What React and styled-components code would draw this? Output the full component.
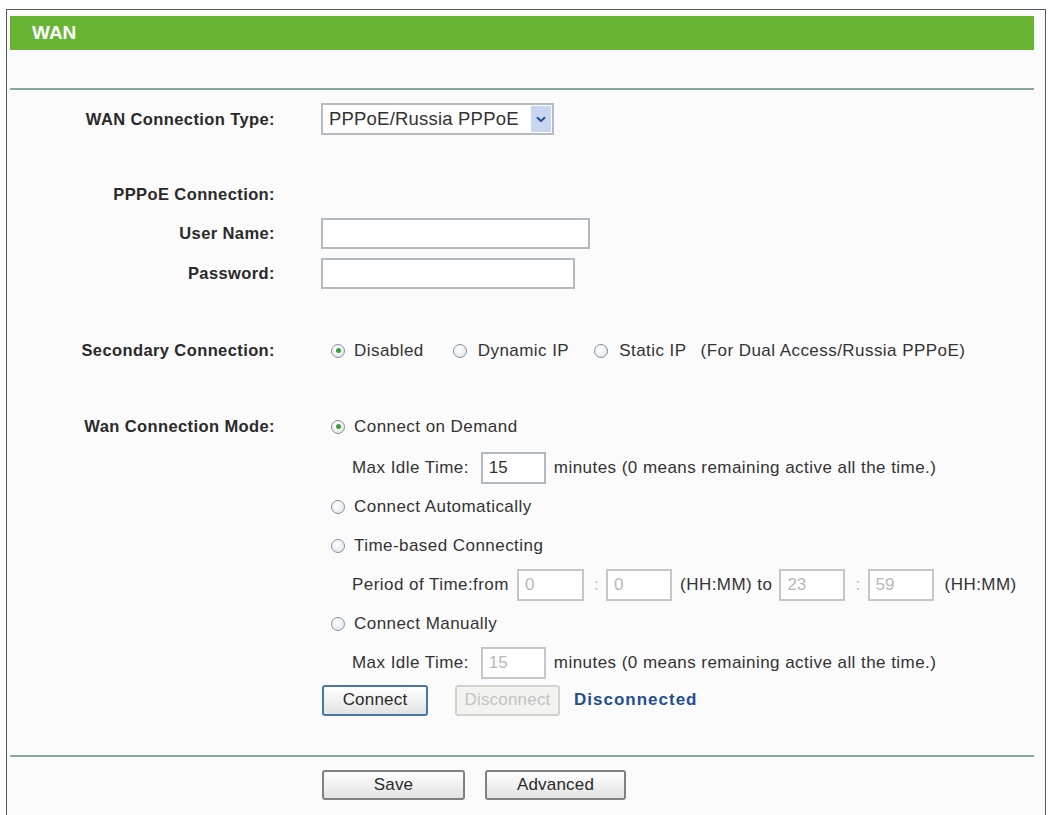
import React from "react";
import styled, { createGlobalStyle } from "styled-components";

const GlobalStyle = createGlobalStyle`
  body {
    margin: 0;
    background: #ffffff;
    font-family: "Liberation Sans", Arial, sans-serif;
    color: #222;
  }
`;

const Frame = styled.div`
  margin: 9px 0 0 6px;
  width: 1040px;
  min-height: 820px;
  border: 1px solid #5a5a5a;
  border-bottom: none;
  background: #fbfbfb;
  padding: 6px 11px 0 3px;
  box-sizing: border-box;
`;

const TitleBar = styled.div`
  height: 34px;
  background: #67b533;
  color: #fff;
  font-weight: bold;
  font-size: 19px;
  display: flex;
  align-items: center;
  padding-left: 22px;
`;

const Divider = styled.div`
  height: 2px;
  background: #86a99c;
  margin-top: ${(p) => p.$mt}px;
`;

const Row = styled.div`
  display: flex;
  align-items: center;
  height: ${(p) => p.$h}px;
  margin-top: ${(p) => p.$mt || 0}px;
  margin-left: -3px;
`;

const Label = styled.div`
  width: 268px;
  flex-shrink: 0;
  text-align: right;
  font-weight: bold;
  font-size: 16.5px;
  letter-spacing: 0.4px;
  color: #2a2a2a;
`;

const Field = styled.div`
  display: flex;
  align-items: center;
  margin-left: ${(p) => 46 + (p.$indent || 0)}px;
  font-size: 17px;
  letter-spacing: 0.45px;
  color: #333;
  white-space: nowrap;
`;

const Select = styled.div`
  width: 233px;
  height: 32px;
  box-sizing: border-box;
  border: 2px solid #b7bcc3;
  background: #fff;
  display: flex;
  align-items: center;
  justify-content: space-between;
  padding-left: 6px;
  font-size: 18.5px;
  letter-spacing: 0.2px;
  color: #333;
`;

const SelectArrow = styled.span`
  width: 20px;
  height: 26px;
  margin-right: 1px;
  background: #c8d6f2;
  display: flex;
  align-items: center;
  justify-content: center;
`;

const TextBox = styled.div`
  width: ${(p) => p.$w}px;
  height: ${(p) => p.$h || 32}px;
  box-sizing: border-box;
  border: 2px solid ${(p) => (p.$disabled ? "#c4c7cb" : "#b3b9c1")};
  background: #fff;
  color: ${(p) => (p.$disabled ? "#b9b9b9" : "#333")};
  font-size: 17px;
  letter-spacing: 0;
  display: flex;
  align-items: center;
  padding-left: 6px;
  margin: ${(p) => p.$m || "0"};
  flex-shrink: 0;
`;

const Option = styled.label`
  display: flex;
  align-items: center;
  margin-right: ${(p) => p.$gap || 0}px;
`;

const RadioDot = styled.span`
  width: 14px;
  height: 14px;
  box-sizing: border-box;
  border-radius: 50%;
  border: 1.5px solid #8391a0;
  background: radial-gradient(circle at 40% 35%, #ffffff, #dde2e8);
  margin: 0 ${(p) => p.$space || 9}px 0 -1px;
  display: flex;
  align-items: center;
  justify-content: center;
  flex-shrink: 0;

  &::after {
    content: "";
    width: 5px;
    height: 5px;
    border-radius: 50%;
    background: ${(p) => (p.$checked ? "#3f9c3a" : "transparent")};
  }
`;

const Note = styled.span`
  color: ${(p) => (p.$muted ? "#b9b9b9" : "inherit")};
`;

const Button = styled.div`
  width: ${(p) => p.$w}px;
  height: ${(p) => p.$h || 31}px;
  box-sizing: border-box;
  border: 2px solid ${(p) => (p.$primary ? "#4b76ad" : p.$disabled ? "#d3d3cd" : "#7f8184")};
  border-radius: 3px;
  background: ${(p) =>
    p.$disabled ? "#f3f3ef" : "linear-gradient(#ffffff, #f1f1f1 50%, #e2e2e2)"};
  color: ${(p) => (p.$disabled ? "#c3c3c3" : "#2a2a2a")};
  font-size: 17px;
  letter-spacing: 0.2px;
  display: flex;
  align-items: center;
  justify-content: center;
  margin-right: ${(p) => p.$mr || 0}px;
  flex-shrink: 0;
`;

const Status = styled.span`
  color: #1f4f8f;
  font-weight: bold;
  font-size: 17px;
  letter-spacing: 1px;
`;

const Radio = ({ checked, children, gap, space }) => (
  <Option $gap={gap}>
    <RadioDot $checked={checked} $space={space} />
    {children}
  </Option>
);

const ChevronDown = () => (
  <svg width="10" height="7" viewBox="0 0 10 7">
    <path d="M1 1.2 L5 5 L9 1.2" fill="none" stroke="#2b4f8f" strokeWidth="2" />
  </svg>
);

const modes = [
  { key: "demand", text: "Connect on Demand", checked: true },
  { key: "auto", text: "Connect Automatically" },
  { key: "time", text: "Time-based Connecting" },
  { key: "manual", text: "Connect Manually" },
];

const STEP = 39.1;

export default function App() {
  return (
    <>
      <GlobalStyle />
      <Frame>
        <TitleBar>WAN</TitleBar>
        <Divider $mt={38} />

        <Row $h={32} $mt={13}>
          <Label>WAN Connection Type:</Label>
          <Field>
            <Select>
              PPPoE/Russia PPPoE
              <SelectArrow>
                <ChevronDown />
              </SelectArrow>
            </Select>
          </Field>
        </Row>

        <Row $h={20} $mt={49}>
          <Label>PPPoE Connection:</Label>
        </Row>
        <Row $h={31} $mt={14}>
          <Label>User Name:</Label>
          <Field>
            <TextBox $w={269} $h={31} />
          </Field>
        </Row>
        <Row $h={31} $mt={9}>
          <Label>Password:</Label>
          <Field>
            <TextBox $w={254} $h={31} />
          </Field>
        </Row>

        <Row $h={39} $mt={42}>
          <Label>Secondary Connection:</Label>
          <Field $indent={11}>
            <Radio checked gap={30}>Disabled</Radio>
            <Radio gap={26} space={11}>Dynamic IP</Radio>
            <Radio gap={14} space={11}>Static IP</Radio>
            <span>(For Dual Access/Russia PPPoE)</span>
          </Field>
        </Row>

        <Row $h={STEP} $mt={37}>
          <Label>Wan Connection Mode:</Label>
          <Field $indent={11}>
            <Radio checked>{modes[0].text}</Radio>
          </Field>
        </Row>
        <Row $h={STEP} $mt={2}>
          <Label />
          <Field $indent={31}>
            Max Idle Time:
            <TextBox $w={65} $m="0 8px 0 12px">15</TextBox>
            minutes (0 means remaining active all the time.)
          </Field>
        </Row>
        <Row $h={STEP}>
          <Label />
          <Field $indent={11}>
            <Radio>{modes[1].text}</Radio>
          </Field>
        </Row>
        <Row $h={STEP}>
          <Label />
          <Field $indent={11}>
            <Radio>{modes[2].text}</Radio>
          </Field>
        </Row>
        <Row $h={STEP}>
          <Label />
          <Field $indent={31}>
            Period of Time:from
            <TextBox $w={67} $disabled $m="0 10px 0 8px">0</TextBox>
            <Note $muted>:</Note>
            <TextBox $w={66} $disabled $m="0 8px 0 7px">0</TextBox>
            (HH:MM) to
            <TextBox $w={66} $disabled $m="0 10px 0 7px">23</TextBox>
            <Note $muted>:</Note>
            <TextBox $w={66} $disabled $m="0 11px 0 7px">59</TextBox>
            (HH:MM)
          </Field>
        </Row>
        <Row $h={STEP}>
          <Label />
          <Field $indent={11}>
            <Radio>{modes[3].text}</Radio>
          </Field>
        </Row>
        <Row $h={STEP}>
          <Label />
          <Field $indent={31}>
            Max Idle Time:
            <TextBox $w={65} $disabled $m="0 8px 0 12px">15</TextBox>
            minutes (0 means remaining active all the time.)
          </Field>
        </Row>
        <Row $h={STEP} $mt={-2}>
          <Label />
          <Field $indent={1}>
            <Button $w={106} $primary $mr={27}>Connect</Button>
            <Button $w={105} $disabled $mr={14}>Disconnect</Button>
            <Status>Disconnected</Status>
          </Field>
        </Row>

        <Divider $mt={35} />

        <Row $h={30} $mt={13}>
          <Label />
          <Field $indent={1}>
            <Button $w={143} $h={30} $mr={20}>Save</Button>
            <Button $w={141} $h={30}>Advanced</Button>
          </Field>
        </Row>
      </Frame>
    </>
  );
}
